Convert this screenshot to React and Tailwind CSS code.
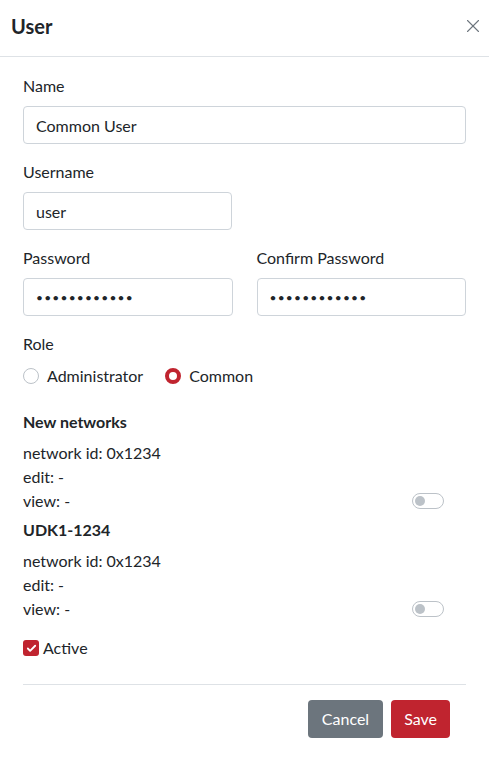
import { X, Check } from "lucide-react";

function Field({ label, value, secret = false, className = "" }) {
  return (
    <div className={`flex flex-col ${className}`}>
      <label className="mb-[8px] leading-6">{label}</label>
      <input
        type={secret ? "password" : "text"}
        readOnly
        value={value}
        className={`h-[38px] rounded-[4px] border border-[#ced4da] bg-white px-3 text-[#212529] outline-none ${secret ? "text-[12px] tracking-[1.2px]" : "text-[16px]"}`}
      />
    </div>
  );
}

function Radio({ label, checked }) {
  return (
    <label className="flex items-center gap-2">
      <span
        className={`h-4 w-4 rounded-full ${checked ? "border-[4px] border-[#c0242f] bg-white" : "border border-[#bcc2c8] bg-white"}`}
      />
      <span>{label}</span>
    </label>
  );
}

function Toggle() {
  return (
    <span className="flex h-4 w-8 items-center rounded-full border border-[#bcc2c8] bg-white px-[2px]">
      <span className="h-[10px] w-[10px] rounded-full bg-[#bcc2c8]" />
    </span>
  );
}

function Network({ title }) {
  return (
    <div className="flex flex-col">
      <div className="mb-[7px] font-bold leading-6">{title}</div>
      <div className="leading-6">network id: 0x1234</div>
      <div className="leading-6">edit: -</div>
      <div className="flex items-center justify-between leading-[23px]">
        <span>view: -</span>
        <span className="mr-[22px]">
          <Toggle />
        </span>
      </div>
    </div>
  );
}

export default function App() {
  return (
    <div className="min-h-[766px] w-[489px] bg-white text-[16px] text-[#212529]" style={{ fontFamily: "Lato, sans-serif" }}>
      <div className="flex h-[57px] items-center justify-between border-b border-[#dee2e6] pb-[5px] pl-[11px] pr-[5px]">
        <h1 className="text-[20px] font-bold">User</h1>
        <X size={22} strokeWidth={1.2} className="text-[#6c757d]" />
      </div>

      <div className="flex flex-col px-[23px] pt-[17px]">
        <Field label="Name" value="Common User" />
        <div className="mt-[16px] flex">
          <Field label="Username" value="user" className="w-[209px]" />
        </div>
        <div className="mt-[16px] grid grid-cols-2 gap-6">
          <Field label="Password" value="password1234" secret />
          <Field label="Confirm Password" value="password1234" secret />
        </div>

        <div className="mt-[16px] leading-6">Role</div>
        <div className="mt-[8px] flex items-center gap-[22px] leading-6">
          <Radio label="Administrator" />
          <Radio label="Common" checked />
        </div>

        <div className="mt-[22px] flex flex-col gap-[6px]">
          <Network title="New networks" />
          <Network title="UDK1-1234" />
        </div>

        <label className="mt-[16px] flex items-center gap-[4px] leading-6">
          <span className="flex h-4 w-4 items-center justify-center rounded-[3px] bg-[#c0242f]">
            <Check size={11} strokeWidth={4} className="text-white" />
          </span>
          <span>Active</span>
        </label>

        <div className="mt-[24px] border-t border-[#dee2e6]" />

        <div className="mt-[15px] flex justify-end gap-2 pr-[16px]">
          <button className="h-[38px] rounded-[4px] bg-[#6c757d] px-[14px] text-white">Cancel</button>
          <button className="h-[38px] rounded-[4px] bg-[#c0242f] px-[13px] text-white">Save</button>
        </div>
      </div>
    </div>
  );
}
